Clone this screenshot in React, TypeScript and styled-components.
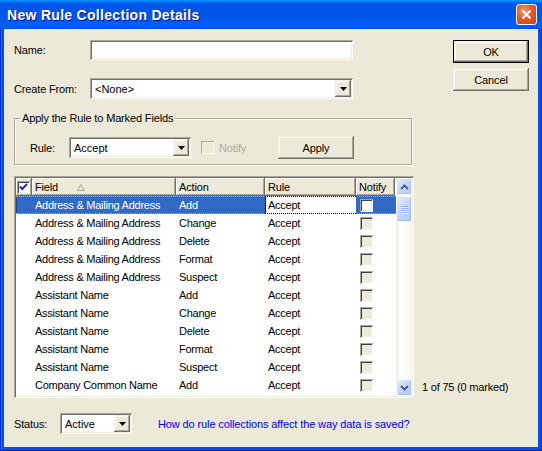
import React from "react"
import styled, { createGlobalStyle, css } from 'styled-components'

// ******************** //
// CONSTANTS
// ******************** //

const FACE = '#ECE9D8'
const DARK = '#716F64'
const SHADOW = '#ACA899'
const LIGHT = '#F1EFE2'
const SELECTED = '#316AC5'

const FIELDS: [string, string][] = [
  ['Address & Mailing Address', 'Add'],
  ['Address & Mailing Address', 'Change'],
  ['Address & Mailing Address', 'Delete'],
  ['Address & Mailing Address', 'Format'],
  ['Address & Mailing Address', 'Suspect'],
  ['Assistant Name', 'Add'],
  ['Assistant Name', 'Change'],
  ['Assistant Name', 'Delete'],
  ['Assistant Name', 'Format'],
  ['Assistant Name', 'Suspect'],
  ['Company Common Name', 'Add'],
]

const COLS = { mark: 16, field: 144, action: 89, rule: 91, notify: 39 }

const GlobalStyle = createGlobalStyle`
  html, body {
    margin: 0;
    padding: 0;
    background: #fff;
  }
  body {
    font-family: "Liberation Sans", Arial, sans-serif;
    font-size: 11px;
    letter-spacing: -0.15px;
    color: #000;
  }
`

const sunken = css`
  box-shadow: inset 1px 1px ${SHADOW}, inset -1px -1px #fff, inset 2px 2px ${DARK}, inset -2px -2px ${LIGHT};
`

const raised = css`
  box-shadow: inset -1px -1px ${DARK}, inset 1px 1px ${LIGHT}, inset -2px -2px ${SHADOW}, inset 2px 2px #fff;
`

// ******************** //
// WINDOW FRAME
// ******************** //

const Window = styled.div`
  width: 542px;
  height: 451px;
  box-sizing: border-box;
  display: flex;
  flex-direction: column;
  background: #0054E3;
  padding: 0 4px 4px 4px;
  box-shadow: inset 1px 0 #0831D9, inset -1px 0 #001EA0, inset 0 -1px #001EA0, inset 2px 0 #166AEE;
`

const TitleBar = styled.div`
  height: 29px;
  margin: 0 -4px;
  padding: 0 5px 0 7px;
  display: flex;
  align-items: center;
  background: linear-gradient(to bottom, #0997FF 0%, #0058EE 12%, #0054E3 45%, #0060F8 85%, #0055E5 100%);
`

const TitleText = styled.span`
  flex: 1;
  font-family: "Liberation Sans", Arial, sans-serif;
  font-weight: bold;
  font-size: 14px;
  letter-spacing: 0.3px;
  color: #fff;
  text-shadow: 1px 1px #0F1089;
`

const CloseButton = styled.div`
  width: 19px;
  height: 19px;
  border: 1px solid #fff;
  border-radius: 3px;
  background: radial-gradient(circle at 35% 30%, #F09A7E 0%, #E3582F 45%, #C6401E 100%);
  display: flex;
  align-items: center;
  justify-content: center;
`

const Client = styled.div`
  flex: 1;
  background: ${FACE};
  padding: 11px 10px 0 10px;
  display: flex;
  flex-direction: column;
`

const MainRow = styled.div`
  display: flex;
`

const LeftColumn = styled.div`
  width: 400px;
  display: flex;
  flex-direction: column;
`

const RightColumn = styled.div`
  flex: 1;
  display: flex;
  flex-direction: column;
  justify-content: space-between;
  padding-left: 8px;
`

// ******************** //
// FORM CONTROLS
// ******************** //

const FormRow = styled.div<{ $gap?: number }>`
  display: flex;
  align-items: center;
  margin-top: ${p => p.$gap || 0}px;
`

const Label = styled.span<{ $width: number }>`
  width: ${p => p.$width}px;
  flex-shrink: 0;
`

const TextInput = styled.div`
  width: 263px;
  height: 20px;
  background: #fff;
  ${sunken}
`

const ComboBox = styled.div<{ $width: number }>`
  width: ${p => p.$width}px;
  height: 21px;
  box-sizing: border-box;
  padding: 2px;
  background: #fff;
  display: flex;
  align-items: center;
  ${sunken}
`

const ComboText = styled.span`
  flex: 1;
  padding-left: 3px;
  letter-spacing: 0;
`

const DropButton = styled.div`
  width: 16px;
  height: 17px;
  background: ${FACE};
  display: flex;
  align-items: center;
  justify-content: center;
  box-shadow: inset -1px -1px ${DARK}, inset 1px 1px ${LIGHT}, inset -2px -2px ${SHADOW}, inset 2px 2px #fff;
`

const Button = styled.div<{ $default?: boolean }>`
  width: 76px;
  height: 23px;
  box-sizing: border-box;
  display: flex;
  align-items: center;
  justify-content: center;
  background: ${FACE};
  ${raised}
  ${p => p.$default && css`
    border: 1px solid #000;
  `}
`

const ButtonStack = styled.div`
  display: flex;
  flex-direction: column;
  gap: 5px;
  margin-left: 31px;
`

const CheckBox = styled.div<{ $fill?: string, $disabled?: boolean, $gap?: number }>`
  width: 13px;
  height: 13px;
  flex-shrink: 0;
  box-sizing: border-box;
  margin-left: ${p => p.$gap || 0}px;
  background: ${p => p.$fill || FACE};
  display: flex;
  align-items: center;
  justify-content: center;
  ${p => p.$disabled
    ? css`box-shadow: inset 1px 1px ${SHADOW}, inset -1px -1px #fff, inset 2px 2px ${LIGHT};`
    : css`box-shadow: inset 1px 1px ${SHADOW}, inset -1px -1px #fff, inset 2px 2px #404040, inset -2px -2px ${LIGHT};`}
`

// ******************** //
// GROUP BOX
// ******************** //

const GroupBox = styled.div`
  position: relative;
  margin-top: 19px;
  width: 398px;
  height: 47px;
  box-sizing: border-box;
  border: 1px solid ${SHADOW};
  box-shadow: inset 1px 1px #fff, 1px 1px #fff;
  padding: 12px 57px 0 15px;
  display: flex;
  align-items: center;
  justify-content: space-between;
`

const GroupLegend = styled.span`
  position: absolute;
  left: 5px;
  top: -7px;
  padding: 0 2px;
  line-height: 13px;
  background: ${FACE};
`

const GroupRow = styled.div`
  display: flex;
  align-items: center;
  height: 23px;
`

const NotifyText = styled.span`
  margin-left: 5px;
  color: ${SHADOW};
`

// ******************** //
// LIST
// ******************** //

const List = styled.div`
  margin-top: 11px;
  height: 222px;
  box-sizing: border-box;
  padding: 2px;
  background: #fff;
  display: flex;
  ${sunken}
`

const Grid = styled.div`
  width: 380px;
  display: flex;
  flex-direction: column;
`

const Header = styled.div`
  display: flex;
  height: 18px;
  flex-shrink: 0;
`

const HeaderCell = styled.div<{ $width: number, $pad?: number }>`
  width: ${p => p.$width}px;
  box-sizing: border-box;
  padding-left: ${p => p.$pad ?? 3}px;
  display: flex;
  align-items: center;
  background: ${FACE};
  box-shadow: inset -1px -1px ${DARK}, inset 1px 1px #fff, inset -2px -2px ${SHADOW};
`

const SortArrow = styled.svg`
  margin-left: 19px;
`

const Row = styled.div<{ $selected?: boolean }>`
  display: flex;
  height: 18px;
  box-sizing: border-box;
  flex-shrink: 0;
  ${p => p.$selected && css`
    background: ${SELECTED};
    color: #fff;
    border-top: 1px dotted #E8A33D;
    border-bottom: 1px dotted #E8A33D;
    box-shadow: inset 1px 0 #1B3F8A;
  `}
`

const Cell = styled.div<{ $width: number, $editing?: boolean }>`
  width: ${p => p.$width}px;
  box-sizing: border-box;
  padding-left: 3px;
  display: flex;
  align-items: center;
  letter-spacing: -0.25px;
  white-space: nowrap;
  overflow: hidden;
  ${p => p.$editing && css`
    background: #fff;
    color: #000;
    border-left: 1px solid #000;
    border-top: 1px dotted #000;
    border-bottom: 1px dotted #000;
    margin: -1px 0;
    padding-left: 2px;
  `}
`

const NotifyCell = styled(Cell)`
  padding-left: 4px;
`

const ScrollBar = styled.div`
  width: 16px;
  display: flex;
  flex-direction: column;
  background: linear-gradient(to right, #EEEDE5 0%, #FDFDFA 25%, #F7F7F2 100%);
`

const ScrollButton = styled.div`
  width: 16px;
  height: 17px;
  box-sizing: border-box;
  border: 1px solid #fff;
  border-radius: 2px;
  background: linear-gradient(135deg, #E4EBFE 0%, #C6D5FC 50%, #B4C8F6 100%);
  display: flex;
  align-items: center;
  justify-content: center;
  box-shadow: inset -1px -1px #A9BEF0;
`

const ScrollThumb = styled(ScrollButton)`
  height: 26px;
  margin-top: 1px;
  flex-direction: column;
  gap: 1px;
`

const Grip = styled.div`
  width: 7px;
  height: 1px;
  background: #8CB0F8;
  box-shadow: 0 1px #EEF4FE;
`

const ScrollTrack = styled.div`
  flex: 1;
`

const CountText = styled.span`
  padding-bottom: 5px;
  letter-spacing: -0.2px;
`

// ******************** //
// STATUS ROW
// ******************** //

const StatusRow = styled.div`
  display: flex;
  align-items: center;
  margin-top: 15px;
`

const LinkText = styled.span`
  margin-left: 26px;
  color: #0000FF;
  letter-spacing: -0.12px;
`

// ******************** //
// ICONS
// ******************** //

const DownArrow = () => (
  <svg width="7" height="4" viewBox="0 0 7 4">
    <path d="M0 0h7L3.5 4z" fill="#000" />
  </svg>
)

const Chevron = ({ up }: { up?: boolean }) => (
  <svg width="9" height="6" viewBox="0 0 9 6">
    <path d={up ? 'M1 5L4.5 1.5L8 5' : 'M1 1L4.5 4.5L8 1'} stroke="#4D6185" strokeWidth="2" fill="none" />
  </svg>
)

const CheckMark = () => (
  <svg width="9" height="8" viewBox="0 0 9 8">
    <path d="M1 3.5L3.3 6L8 1" stroke="#2121D6" strokeWidth="2" fill="none" />
  </svg>
)

const Combo = ({ width, value }: { width: number, value: string }) => (
  <ComboBox $width={width}>
    <ComboText>{value}</ComboText>
    <DropButton><DownArrow /></DropButton>
  </ComboBox>
)

export default function App() {
  return (
    <>
      <GlobalStyle />
      <Window>
        <TitleBar>
          <TitleText>New Rule Collection Details</TitleText>
          <CloseButton>
            <svg width="11" height="11" viewBox="0 0 11 11">
              <path d="M1.5 1.5L9.5 9.5M9.5 1.5L1.5 9.5" stroke="#fff" strokeWidth="2.2" />
            </svg>
          </CloseButton>
        </TitleBar>

        <Client>
          <MainRow>
            <LeftColumn>
              <FormRow>
                <Label $width={76}>Name:</Label>
                <TextInput />
              </FormRow>
              <FormRow $gap={18}>
                <Label $width={76}>Create From:</Label>
                <Combo width={263} value="<None>" />
              </FormRow>

              <GroupBox>
                <GroupLegend>Apply the Rule to Marked Fields</GroupLegend>
                <GroupRow>
                  <Label $width={39}>Rule:</Label>
                  <Combo width={122} value="Accept" />
                  <CheckBox $disabled $gap={10} />
                  <NotifyText>Notify</NotifyText>
                </GroupRow>
                <GroupRow>
                  <Button>Apply</Button>
                </GroupRow>
              </GroupBox>

              <List>
                <Grid>
                  <Header>
                    <HeaderCell $width={COLS.mark} $pad={1}>
                      <CheckBox $fill="#fff"><CheckMark /></CheckBox>
                    </HeaderCell>
                    <HeaderCell $width={COLS.field}>
                      Field
                      <SortArrow width="8" height="7" viewBox="0 0 8 7">
                        <path d="M4 0.5L7.5 6.5H0.5Z" fill="none" stroke={SHADOW} />
                      </SortArrow>
                    </HeaderCell>
                    <HeaderCell $width={COLS.action}>Action</HeaderCell>
                    <HeaderCell $width={COLS.rule}>Rule</HeaderCell>
                    <HeaderCell $width={COLS.notify}>Notify</HeaderCell>
                  </Header>

                  {FIELDS.map(([field, action], i) => (
                    <Row key={i} $selected={i === 0}>
                      <Cell $width={COLS.mark} />
                      <Cell $width={COLS.field}>{field}</Cell>
                      <Cell $width={COLS.action}>{action}</Cell>
                      <Cell $width={COLS.rule} $editing={i === 0}>Accept</Cell>
                      <NotifyCell $width={COLS.notify}>
                        <CheckBox $fill={i === 0 ? '#fff' : FACE} />
                      </NotifyCell>
                    </Row>
                  ))}
                </Grid>

                <ScrollBar>
                  <ScrollButton><Chevron up /></ScrollButton>
                  <ScrollThumb>
                    <Grip /><Grip /><Grip /><Grip />
                  </ScrollThumb>
                  <ScrollTrack />
                  <ScrollButton><Chevron /></ScrollButton>
                </ScrollBar>
              </List>
            </LeftColumn>

            <RightColumn>
              <ButtonStack>
                <Button $default>OK</Button>
                <Button>Cancel</Button>
              </ButtonStack>
              <CountText>1 of 75 (0 marked)</CountText>
            </RightColumn>
          </MainRow>

          <StatusRow>
            <Label $width={46}>Status:</Label>
            <Combo width={72} value="Active" />
            <LinkText>How do rule collections affect the way data is saved?</LinkText>
          </StatusRow>
        </Client>
      </Window>
    </>
  )
}
